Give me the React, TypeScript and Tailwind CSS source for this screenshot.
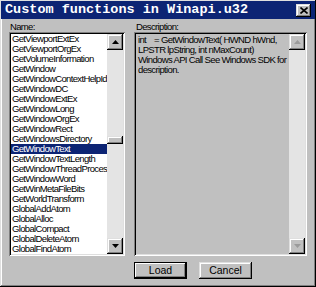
import React from "react";

const items = [
  "GetViewportExtEx",
  "GetViewportOrgEx",
  "GetVolumeInformation",
  "GetWindow",
  "GetWindowContextHelpId",
  "GetWindowDC",
  "GetWindowExtEx",
  "GetWindowLong",
  "GetWindowOrgEx",
  "GetWindowRect",
  "GetWindowsDirectory",
  "GetWindowText",
  "GetWindowTextLength",
  "GetWindowThreadProcessId",
  "GetWindowWord",
  "GetWinMetaFileBits",
  "GetWorldTransform",
  "GlobalAddAtom",
  "GlobalAlloc",
  "GlobalCompact",
  "GlobalDeleteAtom",
  "GlobalFindAtom",
];

const desc = [
  "int    = GetWindowText( HWND hWnd,",
  "LPSTR lpString, int nMaxCount)",
  "Windows API Call See Windows SDK for",
  "description.",
];

const raised =
  "shadow-[inset_-1px_-1px_0_#000,inset_1px_1px_0_#dfdfdf,inset_-2px_-2px_0_#808080,inset_2px_2px_0_#fff]";
const sunken =
  "shadow-[inset_1px_1px_0_#808080,inset_-1px_-1px_0_#fff,inset_2px_2px_0_#000,inset_-2px_-2px_0_#dfdfdf]";

const Arrow = ({ up, dim }: { up?: boolean; dim?: boolean }) => (
  <div className={`w-[16px] h-[16px] bg-[#c0c0c0] flex items-center justify-center shrink-0 ${raised}`}>
    <svg width="7" height="4" viewBox="0 0 7 4">
      <path
        d={up ? "M3.5 0 L7 4 L0 4 Z" : "M0 0 L7 0 L3.5 4 Z"}
        fill={dim ? "#9a9a9a" : "#000"}
      />
    </svg>
  </div>
);

export default function App() {
  return (
    <div
      className="w-[316px] h-[287px] bg-[#c0c0c0] flex flex-col shadow-[inset_-1px_-1px_0_#000,inset_1px_1px_0_#dfdfdf,inset_-2px_-2px_0_#808080,inset_2px_2px_0_#fff] overflow-hidden"
      style={{ fontFamily: '"Liberation Sans", Arial, sans-serif' }}
    >
      <div className="h-[18px] bg-[#0c2474] flex items-center justify-between pl-[4px] pr-[4px] mx-[1px] mt-[1px]">
        <span
          className="text-white font-bold text-[13.5px] leading-none"
          style={{ fontFamily: '"Liberation Mono", "Courier New", monospace' }}
        >
          Custom functions in Winapi.u32
        </span>
        <div className={`w-[15px] h-[13px] bg-[#c0c0c0] flex items-center justify-center ${raised}`}>
          <svg width="8" height="7" viewBox="0 0 8 7">
            <path d="M0.5 0.5 L7.5 6.5 M7.5 0.5 L0.5 6.5" stroke="#000" strokeWidth="1.6" />
          </svg>
        </div>
      </div>

      <div className="flex pl-[9px] pt-[1px] gap-[9px] text-[9.5px] leading-[10px] tracking-[-0.65px] text-black">
        <div className="flex flex-col w-[116px]">
          <div className="h-[12px] pl-[1px] pt-[2px]">Name:</div>
          <div className={`h-[224px] bg-white flex p-[2px] ${sunken}`}>
            <div className="flex-1 flex flex-col overflow-hidden">
              {items.map((it) => (
                <div
                  key={it}
                  className={`h-[10px] shrink-0 pl-[1px] whitespace-nowrap ${
                    it === "GetWindowText" ? "bg-[#0c2474] text-white" : ""
                  }`}
                >
                  {it}
                </div>
              ))}
            </div>
            <div className="w-[16px] flex flex-col bg-[#e4e4e4]">
              <Arrow up />
              <div className="flex-1 flex flex-col justify-center">
                <div className={`h-[8px] bg-[#c0c0c0] -mt-[8px] ${raised}`} />
              </div>
              <Arrow />
            </div>
          </div>
        </div>

        <div className="flex flex-col w-[173px]">
          <div className="h-[12px] pl-[2px] pt-[2px]">Description:</div>
          <div className={`h-[224px] bg-[#c0c0c0] flex p-[2px] ${sunken}`}>
            <div className="flex-1 pl-[2px] pt-[1px] flex flex-col">
              {desc.map((l) => (
                <div key={l} className="h-[10px] whitespace-pre">
                  {l}
                </div>
              ))}
            </div>
            <div className="w-[16px] flex flex-col justify-between bg-[#e4e4e4]">
              <Arrow up dim />
              <Arrow dim />
            </div>
          </div>
          <div className="flex gap-[12px] mt-[6px] text-[10.5px] tracking-normal">
            <button className="w-[53px] h-[17px] bg-[#c0c0c0] border border-black shadow-[inset_-1px_-1px_0_#000,inset_1px_1px_0_#fff,inset_-2px_-2px_0_#808080] flex items-center justify-center leading-none">
              Load
            </button>
            <button className={`w-[53px] h-[17px] bg-[#c0c0c0] flex items-center justify-center leading-none ${raised}`}>
              Cancel
            </button>
          </div>
        </div>
      </div>
    </div>
  );
}
